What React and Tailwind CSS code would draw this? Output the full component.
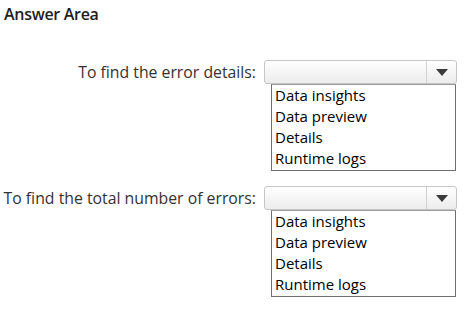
import React from "react";

const options = ["Data insights", "Data preview", "Details", "Runtime logs"];

function Dropdown() {
    return (
        <div className="flex flex-col w-[193px]">
            <div className="flex h-[24px] rounded-[3px] border border-[#c6c6c6] bg-gradient-to-b from-white to-[#ececec]">
                <div className="flex-1" />
                <div className="w-[30px] border-l border-[#d0d0d0] flex items-center justify-center">
                    <svg width="12" height="7" viewBox="0 0 12 7">
                        <path d="M0 0 L12 0 L6 7 Z" fill="#3a3a3a" />
                    </svg>
                </div>
            </div>
            <div className="ml-[7px] w-[185px] border border-[#6f6f6f] border-t-[#9a9a9a] bg-white pl-[3px] pb-[1px]">
                {options.map((o) => (
                    <div key={o} className="h-[21px] leading-[21px] text-[15px] text-black">{o}</div>
                ))}
            </div>
        </div>
    );
}

export default function App() {
    return (
        <div className="w-[472px] h-[312px] bg-white font-['Open_Sans',sans-serif] text-[#333333] overflow-hidden">
            <div className="pl-[4px] pt-[2px] text-[16px] font-semibold tracking-[-0.3px] text-[#1e1e1e]">Answer Area</div>
            <div className="flex flex-col gap-[15px] pt-[34px]">
                <div className="flex items-start">
                    <div className="w-[257px] pr-[1px] text-right text-[15.8px] leading-[24px]">To find the error details:</div>
                    <div className="ml-[7px]"><Dropdown /></div>
                </div>
                <div className="flex items-start">
                    <div className="w-[257px] pr-[1px] text-right text-[15.8px] leading-[24px]">To find the total number of errors:</div>
                    <div className="ml-[7px]"><Dropdown /></div>
                </div>
            </div>
        </div>
    );
}
